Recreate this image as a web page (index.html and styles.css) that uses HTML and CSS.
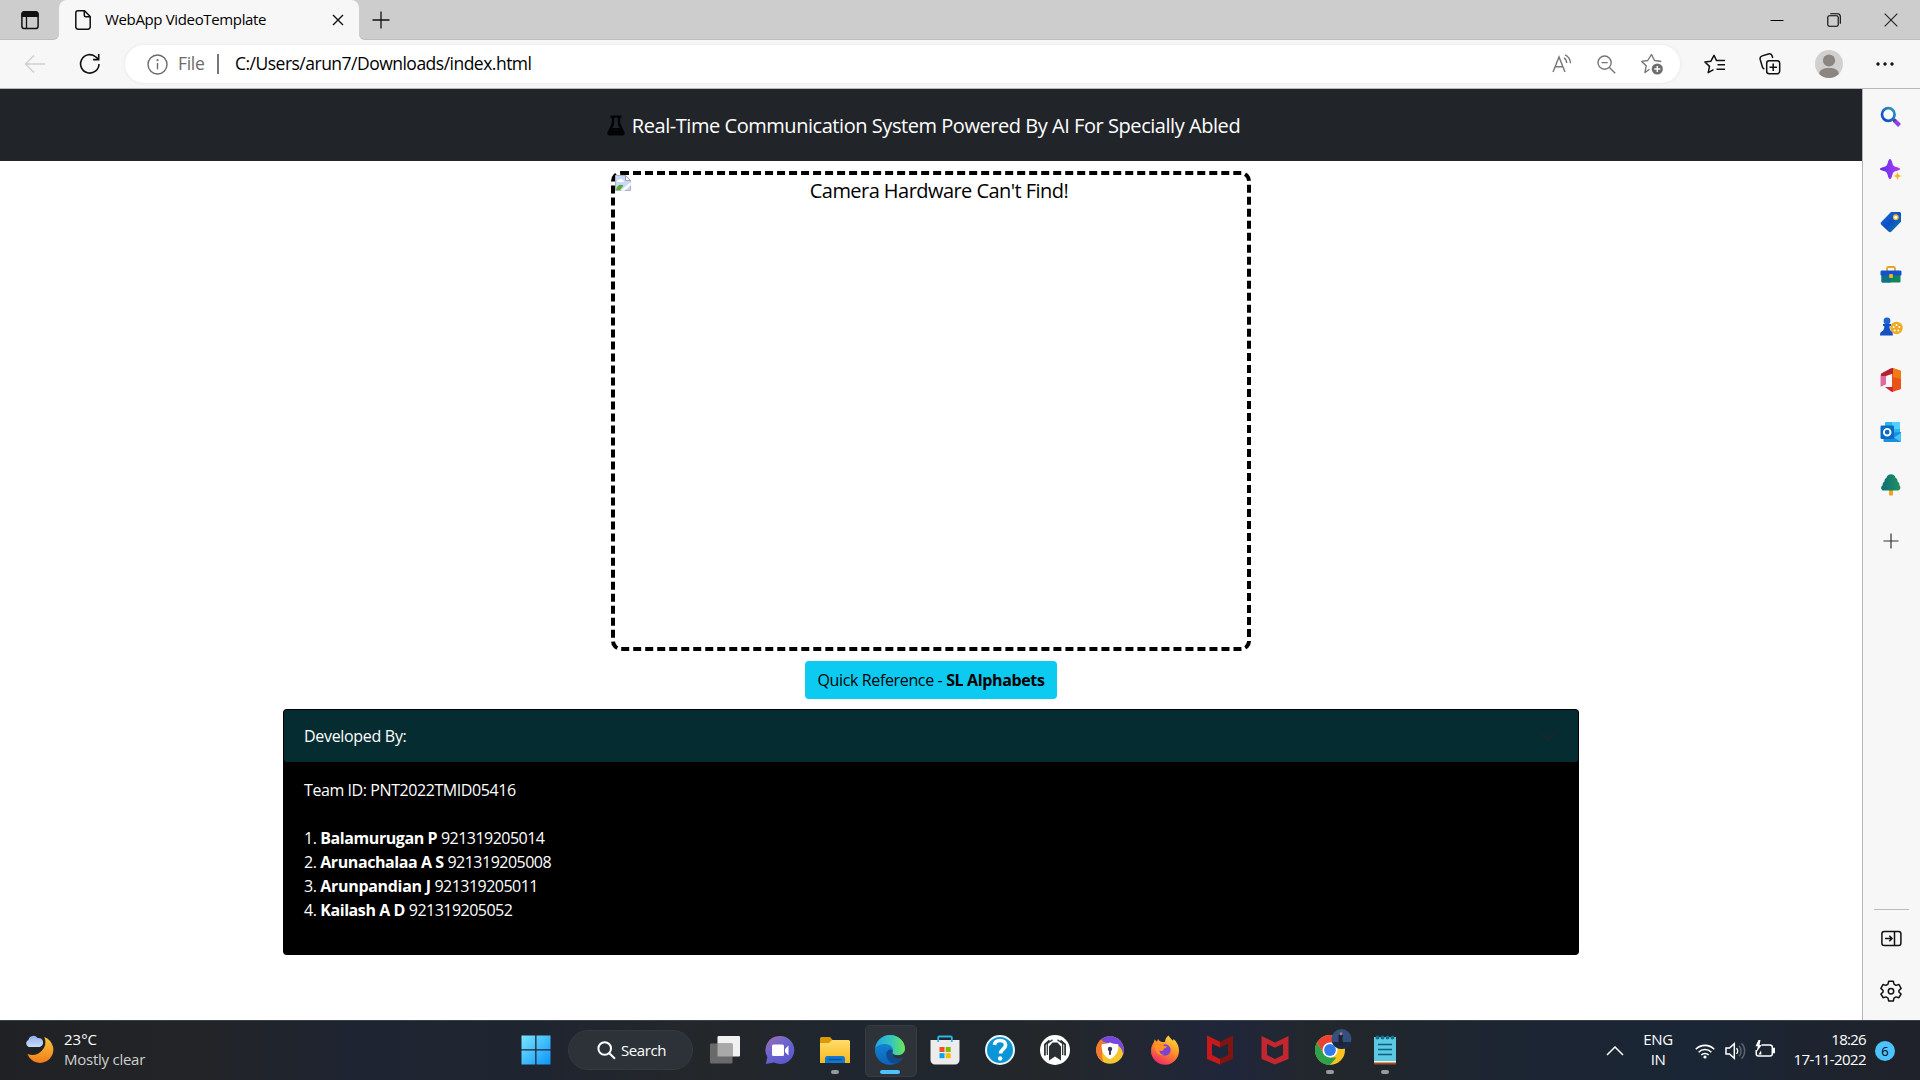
FILE: index.html
```html
<!DOCTYPE html>
<html lang="en">
<head>
<meta charset="utf-8">
<title>WebApp VideoTemplate</title>
<link rel="stylesheet" href="styles.css">
</head>
<body>
<div class="tabstrip">
  <div class="strip-left">
    <svg width="20" height="22" viewBox="0 0 20 22"><rect x="1.9" y="2.9" width="16.200" height="16.600" rx="2.600" fill="none" stroke="#111" stroke-width="1.500"/><path d="M1.500 8V5A3 3 0 0 1 4.500 2h11a3 3 0 0 1 3 3v3z" fill="#111"/><path d="M6.500 7v12" stroke="#111" stroke-width="1.300"/></svg>
  </div>
  <div class="tab-slot">
    <div class="tab">
      <svg width="16" height="20" viewBox="0 0 16 20" fill="none" stroke="#111" stroke-width="1.500"><path d="M3 .8h6.500l5.700 5.700V17a2.200 2.200 0 0 1-2.200 2.200H3A2.200 2.200 0 0 1 .8 17V3A2.200 2.200 0 0 1 3 .8z"/><path d="M9.300 1v4.200a1.500 1.500 0 0 0 1.500 1.500H15"/></svg>
      <span class="tab-title">WebApp VideoTemplate</span>
      <svg class="tab-close" width="12" height="12" viewBox="0 0 12 12" stroke="#111" stroke-width="1.400"><path d="M1 1l10 10M11 1L1 11"/></svg>
    </div>
  </div>
  <div class="strip-right">
    <svg width="18" height="18" viewBox="0 0 18 18" stroke="#111" stroke-width="1.300"><path d="M9 .5v17M.5 9h17"/></svg>
    <div class="window-buttons">
      <svg width="14" height="14" viewBox="0 0 14 14" stroke="#000" stroke-width="1"><path d="M.5 7.500h13"/></svg>
      <svg width="14" height="14" viewBox="0 0 14 14" fill="none" stroke="#000" stroke-width="1.100"><rect x=".8" y="2.700" width="10.400" height="10.500" rx="1.500"/><path d="M3.300.7h7.200a2.800 2.800 0 0 1 2.800 2.800v7.300"/></svg>
      <svg width="14" height="14" viewBox="0 0 14 14" stroke="#222" stroke-width="1.100"><path d="M.7.7l12.600 12.600M13.300.7L.7 13.300"/></svg>
    </div>
  </div>
</div>

<div class="toolbar">
  <svg class="back" width="22" height="20" viewBox="0 0 22 20" fill="none" stroke="#cfcfcf" stroke-width="1.500"><path d="M10 1.500L1.500 10l8.500 8.500M1.500 10H21"/></svg>
  <svg class="reload" width="22" height="22" viewBox="0 0 22 22" fill="none" stroke="#111" stroke-width="1.600"><path d="M20 11a9.200 9.200 0 1 1-3.100-7L19.500 6.300M19.700 1v5.600h-5.600"/></svg>
  <div class="address">
    <svg width="21" height="21" viewBox="0 0 21 21" fill="none" stroke="#6b6b6b" stroke-width="1.400"><circle cx="10.500" cy="10.500" r="9.500"/><path d="M10.500 9v6.300"/><circle cx="10.500" cy="6.200" r=".4"/></svg>
    <span class="scheme">File</span>
    <span class="bar"></span>
    <span class="url">C:/Users/arun7/Downloads/index.html</span>
    <div class="address-icons">
      <svg width="20" height="20" viewBox="0 0 20 20" fill="none" stroke="#767676" stroke-width="1.400"><path d="M1 18L7 3l6 15M3.200 12.800h7.700M12 3.800c1.600 1 2.600 2.800 2.700 5.200M13 .9c3.300 1.600 5.300 4.600 5.500 8.300"/></svg>
      <svg width="19" height="19" viewBox="0 0 19 19" fill="none" stroke="#767676" stroke-width="1.400"><circle cx="7.600" cy="7.600" r="6.600"/><path d="M12.500 12.500l5.700 5.700M4.500 7.600h6.200"/></svg>
      <svg width="23" height="22" viewBox="0 0 23 22"><path d="M8.500 16.200L4 19.500l1.200-6.800-4.500-4.300 6-.9L10.500 1.500l3 6 6.800 1" fill="none" stroke="#767676" stroke-width="1.400" stroke-linejoin="round"/><circle cx="16.300" cy="16" r="5.600" fill="#6e6e6e"/><path d="M16.300 13v6M13.300 16h6" stroke="#fff" stroke-width="1.400"/></svg>
    </div>
  </div>
  <div class="toolbar-icons">
    <svg width="22" height="20" viewBox="0 0 22 20" fill="none" stroke="#111" stroke-width="1.500" stroke-linejoin="round"><path d="M9.500 15.700L4.200 18.700l1.300-6.300L.9 8l6-.8L10 1.300l2.400 5.100H21M13.500 10.700H21M12.500 15.200H21"/></svg>
    <svg width="22" height="22" viewBox="0 0 22 22" fill="none" stroke="#111" stroke-width="1.500"><rect x="7.700" y="7.700" width="13" height="13" rx="2.500"/><path d="M14.200 10.500v7.400M10.500 14.200h7.400M5.300 16A3 3 0 0 1 3.400 14L1.200 6.500a3 3 0 0 1 2-3.600L9.500 1a3 3 0 0 1 3.700 2l.5 2"/></svg>
    <svg width="28" height="28" viewBox="0 0 28 28"><circle cx="14" cy="14" r="14" fill="#d2d0ce"/><circle cx="14" cy="10.500" r="6.100" fill="#8c8683"/><path d="M4.200 23.900C4.600 19.800 8 18 14 18s9.400 1.800 9.800 5.900A14 14 0 0 1 14 28a14 14 0 0 1-9.800-4.100z" fill="#8c8683"/></svg>
    <svg width="18" height="4" viewBox="0 0 18 4" fill="#111"><circle cx="2" cy="2" r="1.700"/><circle cx="9" cy="2" r="1.700"/><circle cx="16" cy="2" r="1.700"/></svg>
  </div>
</div>

<div class="main">
  <div class="page">
    <header class="page-header">
      <svg width="18" height="21" viewBox="0 0 18 21"><path d="M3.500.5h11v2.300h-1.200v5.700l4.200 8.700c.8 1.700-.3 3.300-2 3.300h-13c-1.700 0-2.800-1.600-2-3.300l4.200-8.700V2.800H3.500zm3.700 2.300v6.400L5.300 13h7.400l-1.900-3.800V2.800z" fill="#030405"/></svg>
      <span class="page-title">Real-Time Communication System Powered By AI For Specially Abled</span>
    </header>
    <div class="camera">
      <svg width="16" height="16" viewBox="0 0 16 16"><path d="M.5.500h10l5 5v10H.5z" fill="#c6d8fb" stroke="#b3b3b3"/><path d="M10.500.5v5h5z" fill="#fff" stroke="#a3a3a3"/><path d="M2 7c0-2 1.500-2.500 2.300-2C5 3.300 7.200 3.700 7.500 5c1.300 0 1.500 1.300 1 2z" fill="#fff"/><path d="M1 15c1-5 4.500-6.500 7.500-4.500L5 15z" fill="#56ad36"/><path d="M5.500 15.800L15.800 7v3.200L9.500 15.800z" fill="#fff"/></svg>
      <span class="camera-text">Camera Hardware Can't Find!</span>
    </div>
    <button class="reference">Quick Reference - <b>SL Alphabets</b></button>
    <section class="team">
      <div class="team-head"><span class="dev">Developed By:</span>
        <svg width="18" height="10" viewBox="0 0 18 10" fill="none" stroke="#212529" stroke-width="1.500"><path d="M1 1l8 8 8-8"/></svg>
      </div>
      <div class="team-body">
        <p class="team-id">Team ID: PNT2022TMID05416</p>
        <p>1. <b>Balamurugan P</b> <span class="reg">921319205014</span></p>
        <p>2. <b>Arunachalaa A S</b> <span class="reg">921319205008</span></p>
        <p>3. <b class="wide">Arunpandian J</b> <span class="reg">921319205011</span></p>
        <p>4. <b>Kailash A D</b> <span class="reg">921319205052</span></p>
      </div>
    </section>
  </div>

  <aside class="sidebar">
    <div class="cell"><svg width="22" height="22" viewBox="0 0 22 22"><defs><linearGradient id="sg" x1="0" y1="1" x2="1" y2="0"><stop offset="0" stop-color="#0a3fd0"/><stop offset="1" stop-color="#2b9ac4"/></linearGradient></defs><path d="M14 14l5.500 5.500" stroke="#8b3df0" stroke-width="4"/><path d="M13 13l2 2" stroke="#444" stroke-width="2.500"/><circle cx="8.300" cy="8.500" r="6.300" fill="#fff" stroke="url(#sg)" stroke-width="2.700"/></svg></div>
    <div class="cell"><svg width="22" height="22" viewBox="0 0 22 22"><defs><linearGradient id="st"><stop offset="0" stop-color="#5a2fe8"/><stop offset="1" stop-color="#b23cf4"/></linearGradient></defs><path d="M10 0c1 0 1.500 1 2.300 4 .7 2.500 1.400 3.200 4 4 2.500.7 3.700 1 3.700 2s-1.200 1.300-3.700 2c-2.600.8-3.300 1.500-4 4-.8 3-1.300 4-2.300 4s-1.500-1-2.300-4c-.7-2.500-1.400-3.200-4-4C1.200 11.300 0 11 0 10s1.200-1.300 3.700-2c2.600-.8 3.300-1.500 4-4C8.500 1 9 0 10 0z" fill="url(#st)"/><path d="M17.500 12.500l1.300 3.200 3.200 1.300-3.200 1.300-1.300 3.200-1.300-3.200L13 17l3.200-1.300z" fill="#f6b40e" stroke="#f7f7f7" stroke-width=".5"/></svg></div>
    <div class="cell"><svg width="22" height="22" viewBox="0 0 22 22"><defs><linearGradient id="tg" x2="1" y2="1"><stop offset="0" stop-color="#1a6fe0"/><stop offset=".5" stop-color="#0b4fc4"/><stop offset="1" stop-color="#1684a5"/></linearGradient></defs><path d="M11 1h8.500A1.500 1.500 0 0 1 21 2.500v8.300L11.500 20.500q-1.500 1.300-3 0L1.500 14q-1.700-1.700 0-3.200z" fill="url(#tg)"/><circle cx="15.800" cy="6.300" r="2.300" fill="#fff" stroke="#f0b429" stroke-width="1.300"/></svg></div>
    <div class="cell"><svg width="22" height="20" viewBox="0 0 22 20"><path d="M7 6V3.500A1.500 1.500 0 0 1 8.500 2h5A1.500 1.500 0 0 1 15 3.500V6" fill="none" stroke="#e9a320" stroke-width="1.800"/><path d="M1.500 9h19v7.500a1 1 0 0 1-1 1h-17a1 1 0 0 1-1-1z" fill="#10865f"/><path d="M1.500 9h9v8.500h-8a1 1 0 0 1-1-1z" fill="#0e7287"/><rect x=".5" y="5.500" width="21" height="5" rx="1.300" fill="#1451cf"/><rect x="9.200" y="9" width="3.700" height="4" rx=".7" fill="#f3b426"/></svg></div>
    <div class="cell"><svg width="23" height="20" viewBox="0 0 23 20"><circle cx="16.500" cy="11" r="6.200" fill="#eda91f"/><g fill="#fff"><circle cx="16.500" cy="7.900" r="1"/><circle cx="13.600" cy="10" r="1"/><circle cx="19.400" cy="10" r="1"/><circle cx="14.700" cy="13.500" r="1"/><circle cx="18.300" cy="13.500" r="1"/></g><circle cx="7" cy="4" r="3.400" fill="#1c63d6"/><path d="M3 7h8v2H9.500c0 3 .7 4.500 2.200 5.700.9.700 1.200 1.500 1.200 3.800H0c0-2.300.5-3.100 1.700-3.900C3.500 13.500 4.300 12 4.300 9H3z" fill="#1451c4"/></svg></div>
    <div class="cell"><svg width="22" height="24" viewBox="0 0 22 24"><path d="M12 0l8 2.500q1 .4 1 1.500v16q0 1.100-1 1.500L12 24z" fill="#e8531a"/><path d="M13 0l7 2.500q1 .4 1 1.500v7l-8-2z" fill="#ef7b12"/><path d="M13 0v5.500L6 8v8L.8 18.500V6.500Q.8 5.500 2 5L11 .3z" fill="#b3222e"/><path d="M.8 8L6 8v8L.8 18.500z" fill="#df6aa0"/><path d="M5 19h8v5l-2-.4z" fill="#d5262b"/></svg></div>
    <div class="cell"><svg width="22" height="22" viewBox="0 0 22 22"><rect x="5" y="1" width="15" height="14" rx="1" fill="#2fb4ee"/><path d="M12 1h8v7h-8z" fill="#50d0fa"/><path d="M3.500 12L21 11v9a1 1 0 0 1-1 1H4.500a1 1 0 0 1-1-1z" fill="#1a8fe0"/><path d="M21 12l-7 4.500 7 4.500z" fill="#44c4f8"/><rect x=".5" y="4.500" width="13.500" height="13.500" rx="1.300" fill="#0a6bc6"/><circle cx="7.200" cy="11.200" r="3.300" fill="none" stroke="#fff" stroke-width="1.900"/></svg></div>
    <div class="cell"><svg width="22" height="22" viewBox="0 0 22 22"><defs><linearGradient id="tr"><stop offset="0" stop-color="#0d6e78"/><stop offset="1" stop-color="#22915f"/></linearGradient></defs><rect x="9" y="15" width="4" height="6.500" rx=".8" fill="#eea320"/><path d="M11 .3c2.500 0 4 1.200 4.500 3.500 1.500.8 2.300 2 2 3.600 1.600 1 2.200 2.300 1.900 4 1.600 1.100 1.600 5.100-2.400 5.100H4C1 16.500 0 12.800 2.600 11.400 2.400 9.700 3 8.400 4.500 7.400c-.2-1.600.5-2.800 2-3.600C7 1.500 8.500.3 11 .3z" fill="url(#tr)"/></svg></div>
    <div class="cell plus"><svg width="16" height="16" viewBox="0 0 16 16" stroke="#333" stroke-width="1.200"><path d="M8 .5v15M.5 8h15"/></svg></div>
    <div class="side-bottom">
      <span class="rule"></span>
      <div class="cell"><svg width="21" height="17" viewBox="0 0 21 17" fill="none" stroke="#111" stroke-width="1.500"><rect x=".9" y="1.500" width="19" height="14" rx="2.300"/><path d="M13.500 1.500v14M4 8.500h7M8.300 5.800L11 8.500l-2.700 2.700"/></svg></div>
      <div class="cell"><svg width="22" height="22" viewBox="0 0 22 22" fill="none" stroke="#111" stroke-width="1.500" stroke-linejoin="round"><path d="M8.700 1.200h4.600l.7 3 2 1.200 3-.9 2.100 3.900L18.900 10.500v1.500l2.200 2-2.200 3.700-2.900-.8-2 1.200-.7 2.900H8.700L8 18.100l-2-1.200-2.900.8L.9 14l2.200-2v-1.500L.9 8.400 3 4.500l3 .9 2-1.200z"/><circle cx="11" cy="11.200" r="2.700"/></svg></div>
    </div>
  </aside>
</div>

<footer class="taskbar">
  <div class="weather">
    <svg width="30" height="30" viewBox="0 0 30 30"><defs><linearGradient id="mo" x1="0" y1="0" x2="0" y2="1"><stop offset="0" stop-color="#f8c63c"/><stop offset="1" stop-color="#f07c1a"/></linearGradient><linearGradient id="cl" x1="0" y1="0" x2="0" y2="1"><stop offset="0" stop-color="#8fb0ee"/><stop offset="1" stop-color="#c9dcfb"/></linearGradient></defs><path d="M20.300 3A13.300 13.300 0 1 1 3.500 20 13 13 0 0 0 20.300 3z" fill="url(#mo)"/><path d="M4.500 13a4 4 0 0 1 0-7.300A5 5 0 0 1 13.500 4a4.300 4.300 0 0 1 2 9z" fill="url(#cl)"/></svg>
    <div class="two"><span>23°C</span><span class="sky">Mostly clear</span></div>
  </div>
  <div class="apps">
    <div class="app"><svg width="30" height="30" viewBox="0 0 30 30"><defs><linearGradient id="wn" gradientUnits="userSpaceOnUse" x1="0" y1="0" x2="30" y2="30"><stop offset="0" stop-color="#7be8fd"/><stop offset="1" stop-color="#0a93fb"/></linearGradient></defs><path d="M.5.500h13.700v13.700H.5zM15.500.5H29.500v13.700h-14zM.5 15.500h13.700v14H.5zM15.500 15.500h14v14h-14z" fill="url(#wn)"/></svg></div>
    <div class="search"><svg width="19" height="19" viewBox="0 0 19 19" fill="none" stroke="#fff" stroke-width="2"><circle cx="7.700" cy="7.500" r="6.300"/><path d="M12.300 12.200l5.700 5.500"/></svg><span>Search</span></div>
    <div class="app"><svg width="30" height="30" viewBox="0 0 30 30"><rect x="7.500" y="1" width="22.500" height="20.500" rx="1" fill="#f1f1f1"/><rect x="0" y="8.500" width="22.500" height="20" rx="1" fill="#6a6a6a"/><path d="M7.500 8.500h15v13h-15z" fill="#a9a9a9"/></svg></div>
    <div class="app"><svg width="30" height="30" viewBox="0 0 30 30"><defs><linearGradient id="ch" x2=".7" y2="1"><stop offset="0" stop-color="#a06fae"/><stop offset=".5" stop-color="#6c64cc"/><stop offset="1" stop-color="#5a58d0"/></linearGradient></defs><path d="M15 1a14 14 0 1 1-6 26.500L.8 29l1.600-7A14 14 0 0 1 15 1z" fill="url(#ch)"/><rect x="7" y="9.500" width="12" height="11.500" rx="1.500" fill="#fff"/><path d="M20 14l3.500-3.500v10L20 17z" fill="#fff"/></svg></div>
    <div class="app run"><svg width="30" height="30" viewBox="0 0 30 30"><defs><linearGradient id="fo" x2="0" y2="1"><stop offset="0" stop-color="#ffdc6b"/><stop offset="1" stop-color="#f8b91b"/></linearGradient></defs><path d="M0 3.500A1.500 1.500 0 0 1 1.500 2H10l3 3.500V10H0z" fill="#d99a06"/><path d="M0 8h9l3-3h16.500A1.500 1.500 0 0 1 30 6.500V28H0z" fill="url(#fo)"/><path d="M5 28v-4.500A2.500 2.500 0 0 1 7.500 21h15a2.500 2.500 0 0 1 2.500 2.500V28z" fill="#1078d0"/><path d="M8.500 24.500h13" stroke="#0b4a94" stroke-width="1.400"/></svg></div>
    <div class="app active"><svg width="30" height="30" viewBox="0 0 30 30"><defs><linearGradient id="e1" x1="0" x2="1"><stop offset="0" stop-color="#22a5e4"/><stop offset=".55" stop-color="#35c6bd"/><stop offset="1" stop-color="#6de84f"/></linearGradient><linearGradient id="e2" x2="0" y2="1"><stop offset="0" stop-color="#1590dc"/><stop offset="1" stop-color="#0b63b8"/></linearGradient></defs><circle cx="15" cy="15" r="15" fill="url(#e2)"/><path d="M.2 13C1.500 5.500 7.500 0 15 0c9 0 15 6.500 15 13.500 0 4-3 6.700-7 6.700-3.500 0-5.800-1.500-5.300-3 .9-2.700-.2-7.200-6-8C7 8.700 2.500 10 .2 13z" fill="url(#e1)"/><path d="M17.700 15.500c-2-2.500-6.500-.5-6.500 4 0 5.500 5 9.800 9.800 9.200 3-1.300 5.500-3.500 7-6.200-4.500 2.500-10.500.8-10.900-3.300-.1-1.500.3-2.500.6-3.700z" fill="#124a8f"/><path d="M17.700 17c-.9 1.800.5 3.200 5.300 3.200 3 0 5.500-1.500 6.500-4l1.500 1v5l-2.900.3c-4.500 2.500-10.300.8-10.900-3.300z" fill="#2d3339"/></svg></div>
    <div class="app"><svg width="30" height="30" viewBox="0 0 30 30"><path d="M8.200 7V2.500A1 1 0 0 1 9.200 1.500h11.600a1 1 0 0 1 1 1V7" fill="none" stroke="#2cb5ea" stroke-width="1.800"/><path d="M.5 5h29v20a4.500 4.500 0 0 1-4.500 4.500H5A4.500 4.500 0 0 1 .5 25z" fill="#ececec"/><path d="M8.200 5v2M21.800 5v2" stroke="#2cb5ea" stroke-width="1.800"/><path d="M9.500 12h5v5h-5z" fill="#f25022"/><path d="M15.700 12h5v5h-5z" fill="#7fba00"/><path d="M9.500 18.200h5v5h-5z" fill="#00a4ef"/><path d="M15.700 18.200h5v5h-5z" fill="#ffb900"/></svg></div>
    <div class="app"><svg width="30" height="30" viewBox="0 0 30 30"><circle cx="15" cy="15" r="14" fill="#0a96d6" stroke="#e9f5fb" stroke-width="2"/><path d="M9.500 10c.3-3 2.500-4.500 5.500-4.500 3.300 0 5.600 1.800 5.600 4.600 0 4-4.900 4-5.100 8.400" fill="none" stroke="#fff" stroke-width="3.700"/><circle cx="15.200" cy="23.500" r="2.200" fill="#fff"/></svg></div>
    <div class="app"><svg width="30" height="30" viewBox="0 0 30 30"><circle cx="15" cy="15" r="15" fill="#fff"/><path d="M9 11.500L12.500 7.500h5L21 11.500V25.500L15 21.500l-6 4z" fill="#2b2e32"/><path d="M12.500 4.900L7.300 8.500v11.500M17.500 4.900l5.200 3.600v11.500" fill="none" stroke="#33363a" stroke-width="1.300"/><path d="M9.500 5.500L4.900 9.500V20.500M20.500 5.500l4.600 4v11" fill="none" stroke="#2b2e32" stroke-width="1.700"/></svg></div>
    <div class="app"><svg width="30" height="30" viewBox="0 0 30 30"><circle cx="15" cy="15" r="13.800" fill="#f5c72f"/><path d="M6 4.500A13.800 13.800 0 0 1 28.800 15c0 1.500-.3 3-.7 4.500-.8-6-3.600-9.500-9.100-10C14 9 8 8 6 4.500z" fill="#7548e0"/><path d="M6 4.600A13.800 13.800 0 0 0 8.500 27.200C7 22 6.500 18 8 13c.8-2.800 2.500-4.500 4-5C9 7.500 7 6.500 6 4.600z" fill="#f5792a"/><path d="M15 7.500c2.500 1.300 5 1.500 8.300 1.700.7 7-2.300 12-8.300 15-6-3-9-8-8.300-15C10 9 12.500 8.800 15 7.500z" fill="#fff"/><circle cx="15" cy="14" r="2.200" fill="#32384f"/><path d="M14 14h2v5.500l-1 .5-1-.5z" fill="#32384f"/></svg></div>
    <div class="app"><svg width="30" height="30" viewBox="0 0 30 30"><defs><linearGradient id="ff" x1=".8" y1="0" x2=".3" y2="1"><stop offset="0" stop-color="#ffe23b"/><stop offset=".5" stop-color="#ff8a26"/><stop offset="1" stop-color="#f0266b"/></linearGradient></defs><path d="M18.500.5c1.500 2.500 3 4 4.500 5.300l.7-1.800c3.300 3 5.300 7 5.300 11.500A14 14 0 0 1 1 16C1 12 2.500 9 4 7l.5-2.500L7 6.700 8 4c1 1.500 2 2.700 4 2.900l3 .2C15 4 16.500 2 18.500.5z" fill="url(#ff)"/><circle cx="15" cy="15" r="5.700" fill="#7b43cf"/><path d="M5 9.500c3-1.500 7-.5 9.500 1.500l3 .5c-1 1.500-3.500 1.300-4 3-.6 2-3 1.500-4.500 1 .5 3 3 4.500 5.500 4.500C8 21 4 17 5 9.500z" fill="#ff9127"/></svg></div>
    <div class="app"><svg width="30" height="30" viewBox="0 0 30 30"><path d="M2 .5l13 6.300v5.700L7 8.800V20l8 4v5.500L2 24z" fill="#c8191c"/><path d="M28 .5L15 6.800v5.700l8-3.700V20l-8 4v5.500L28 24z" fill="#7e1510"/></svg></div>
    <div class="app"><svg width="30" height="30" viewBox="0 0 30 30"><path d="M1.500 1L15 7.500 28.500 1v23L15 29.500 1.500 24zM7 9v11l8 4 8-4V9l-8 3.700z" fill="#c1272d" fill-rule="evenodd"/></svg></div>
    <div class="app run"><svg class="chrome" width="38" height="36" viewBox="0 0 38 36"><circle cx="15" cy="21" r="15" fill="#fcc31e"/><path d="M15 6a15 15 0 0 1 13 7.500H15L8.500 24.700 2 13.500A15 15 0 0 1 15 6z" fill="#ea4335"/><path d="M2 13.500l6.500 11.300L15 28.500h6.500L15 36A15 15 0 0 1 2 13.500z" fill="#2da14c"/><circle cx="15" cy="21" r="7.500" fill="#fff"/><circle cx="15" cy="21" r="5.900" fill="#2f7bea"/><circle cx="26.500" cy="10" r="10" fill="#34507f"/><path d="M17 13h19a10 10 0 0 1-19 0z" fill="#1c2944"/><path d="M23.500 6.500c1-2.500 4-2.500 4.500 0l-.7 3 1.200 6.500h-5z" fill="#1d2233"/><circle cx="26" cy="4.800" r="1.500" fill="#a9836f"/></svg></div>
    <div class="app run"><svg width="30" height="30" viewBox="0 0 30 30"><path d="M4 26h22v3.500H4z" fill="#a14f16"/><path d="M4 25h22v2.500H4z" fill="#f2f2f2"/><path d="M4 2h22v24H4z" fill="#5cc8e2"/><path d="M8 9.500h14M8 14.500h14M8 19.500h14" stroke="#0c5f7c" stroke-width="1.600"/><g fill="#13718e"><circle cx="7.500" cy="2.500" r="1.900"/><circle cx="12.500" cy="2.500" r="1.900"/><circle cx="17.500" cy="2.500" r="1.900"/><circle cx="22.500" cy="2.500" r="1.900"/></g></svg></div>
  </div>
  <div class="tray">
    <svg width="18" height="10" viewBox="0 0 18 10" fill="none" stroke="#fff" stroke-width="1.500"><path d="M1 9l8-8 8 8"/></svg>
    <div class="two lang"><span>ENG</span><span>IN</span></div>
    <svg class="wifi" width="20" height="16" viewBox="0 0 20 16" fill="none" stroke="#fff" stroke-width="1.600"><path d="M.8 6.200a13 13 0 0 1 18.400 0M3.600 9.200a9 9 0 0 1 12.800 0M6.300 12a5.300 5.300 0 0 1 7.400 0"/><circle cx="10" cy="14" r="1.600" fill="#fff" stroke="none"/></svg>
    <svg class="vol" width="21" height="18" viewBox="0 0 21 18" fill="none" stroke="#fff" stroke-width="1.500"><path d="M1 6h3.500l4.800-4.300v14.600L4.500 12H1zM11.500 6.200a4 4 0 0 1 0 5.600"/><path d="M14 3.800a7.500 7.500 0 0 1 0 10.400M16.500 1.300a11 11 0 0 1 0 15.400" stroke="#5a6470"/></svg>
    <svg class="bat" width="21" height="18" viewBox="0 0 21 18" fill="none" stroke="#fff" stroke-width="1.500"><path d="M6.500 5H15a2.300 2.300 0 0 1 2.300 2.300v6.400A2.300 2.300 0 0 1 15 16H3.500A2.300 2.300 0 0 1 1.200 13.700V10"/><path d="M18 8.500h1.200v4H18z" fill="#fff"/><path d="M3.500 0L.5 6.300h2.300L1.500 12l5.300-7H4.500L5.500 0zM3.500 14.500h3l-.5-4z" fill="#fff" stroke="none"/></svg>
    <div class="two clock"><span class="time">18:26</span><span class="date">17-11-2022</span></div>
    <span class="badge">6</span>
  </div>
</footer>
</body>
</html>
```
FILE: styles.css
```css
* { box-sizing: border-box; }
body { margin: 0; width: 1920px; height: 1080px; overflow: hidden; display: flex; flex-direction: column; background: #fff; color: #000; font-family: "Open Sans", "Noto Sans", sans-serif; font-size: 16px; }
svg { display: block; flex: none; }
span, b { white-space: nowrap; }
p { margin: 0; }

.tabstrip { display: flex; height: 40px; background: #f7f7f7; }
.strip-left { width: 59px; display: flex; align-items: center; padding: 1px 0 0 20px; background: #cdcdcd; border-bottom: 1px solid #bdbdbd; border-radius: 0 0 6px 0; }
.tab-slot { width: 300px; background: linear-gradient(#cdcdcd 50%, #f7f7f7 50%); }
.tab { display: flex; align-items: center; height: 40px; padding: 0 15px 0 16px; background: #f7f7f7; border-radius: 8px 8px 0 0; }
.tab-title { margin: 0 0 2px 14px; font-size: 15px; line-height: 20px; letter-spacing: -.35px; }
.tab-close { margin-left: auto; }
.strip-right { flex: 1; display: flex; align-items: center; padding: 0 22px 0 13px; background: #cdcdcd; border-bottom: 1px solid #bdbdbd; border-radius: 0 0 0 6px; }
.window-buttons { margin-left: auto; display: flex; gap: 43px; }

.toolbar { display: flex; align-items: center; height: 49px; background: #f7f7f7; border-bottom: 1px solid #b8b8b8; }
.back { margin-left: 24px; }
.reload { margin-left: 33px; }
.address { width: 1555px; height: 38px; margin-left: 24px; display: flex; align-items: center; padding: 0 16px 0 22px; background: #fff; border-radius: 19px; box-shadow: 0 0 4px rgba(0,0,0,.07); }
.scheme { margin: 0 0 2px 10px; width: 27px; font-size: 17.500px; letter-spacing: -.3px; color: #6b6b6b; }
.bar { width: 2px; height: 20px; margin-left: 12px; background: #777; }
.url { margin: 0 0 2px 16px; font-size: 17.500px; letter-spacing: -.51px; }
.address-icons { margin-left: auto; display: flex; align-items: center; gap: 25px; }
.toolbar-icons { flex: 1; display: flex; align-items: center; justify-content: space-between; padding: 0 26px 0 24px; }

.main { display: flex; height: 931px; }
.page { width: 1862px; display: flex; flex-direction: column; align-items: center; }
.page-header { width: 100%; height: 72px; display: flex; align-items: center; justify-content: center; padding-right: 15px; background: #212529; color: #fff; font-size: 20px; }
.page-title { margin-left: 7px; letter-spacing: -.45px; }
.camera { width: 640px; height: 480px; margin-top: 10px; display: flex; border: 4px dashed #000; border-radius: 10px; font-size: 20px; }
.camera-text { flex: 1; text-align: center; line-height: 32px; letter-spacing: -.55px; }
.reference { width: 252px; height: 38px; margin-top: 10px; padding: 0; border: 0; border-radius: 4px; background: #0dcaf0; font-family: inherit; font-size: 16px; letter-spacing: -.36px; color: #000; }
.team { width: 1296px; height: 246px; margin-top: 10px; padding: 1px; background: #000; border-radius: 4px; color: #fff; letter-spacing: -.42px; }
.team-head { height: 52px; display: flex; align-items: center; justify-content: space-between; padding: 0 21px 0 20px; background: #052c30; border-radius: 3px; }
.dev { letter-spacing: -.31px; }
.team-body { padding: 16px 20px; line-height: 24px; }
.team-id { margin-bottom: 24px; }
.wide { letter-spacing: -.3px; }
.reg { letter-spacing: -.52px; }

.sidebar { width: 58px; display: flex; flex-direction: column; background: #f7f7f7; border-left: 1px solid #b5b5b5; padding: 2px 1px 0 0; }
.cell { height: 52.500px; display: flex; align-items: center; justify-content: center; }
.plus { padding-top: 7px; }
.side-bottom { margin-top: auto; display: flex; flex-direction: column; align-items: center; height: 111px; }
.rule { width: 35px; height: 1px; margin-bottom: 2px; background: #bbb; }

.taskbar { height: 60px; display: flex; align-items: center; border-top: 1px solid #3b4147; background: linear-gradient(90deg, #202124 0, #222427 200px, #1e2431 350px, #1f2530 540px, #24272a 700px, #1e2630 880px, #23272a 1040px, #20263a 1230px, #22272b 1330px, #1c2532 1500px, #1a2635 1700px, #1f222a 1900px); color: #fff; font-size: 15px; }
.weather { width: 508.500px; display: flex; align-items: center; padding: 0 0 4px 24px; gap: 10px; }
.two { display: flex; flex-direction: column; line-height: 20px; }
.weather svg { margin-top: 1px; }
.sky { color: #d0d0d0; letter-spacing: -.25px; }
.apps { display: flex; height: 100%; }
.app { width: 55px; height: 58px; display: flex; align-items: center; justify-content: center; position: relative; }
.search { width: 125px; height: 40px; margin: 9px 4.500px 0; display: flex; align-items: center; padding-left: 28px; gap: 5px; background: #2d3238; border: 1px solid #353a40; border-radius: 20px; letter-spacing: -.4px; }
.run::after, .active::after { content: ""; position: absolute; top: 49px; left: 23.500px; width: 8px; height: 4px; border-radius: 2px; background: #9a9a9a; }
.active::after { left: 17.500px; width: 20px; background: #4cc2ff; }
.active::before { content: ""; position: absolute; left: 2.500px; top: 4px; width: 50px; height: 50px; border-radius: 5px; background: #2d3339; border: 1px solid #373d43; }
.active svg { position: relative; }
.chrome { margin: -6px 0 0 8px; }
.tray { margin-left: auto; display: flex; align-items: center; padding-right: 25px; }
.tray .two { padding-bottom: 4px; }
.lang { width: 30px; margin-left: 19px; align-items: center; letter-spacing: -.4px; }
.wifi { margin-left: 22px; }
.vol { margin-left: 10px; }
.bat { margin: -4px 0 0 9px; }
.clock { width: 75px; margin-left: 15px; align-items: flex-end; }
.time { letter-spacing: -.7px; }
.date { letter-spacing: -.58px; }
.badge { width: 20px; height: 20px; margin-left: 9px; border-radius: 50%; background: #4cc2ff; color: #000; font-size: 13px; line-height: 20px; text-align: center; }
```
